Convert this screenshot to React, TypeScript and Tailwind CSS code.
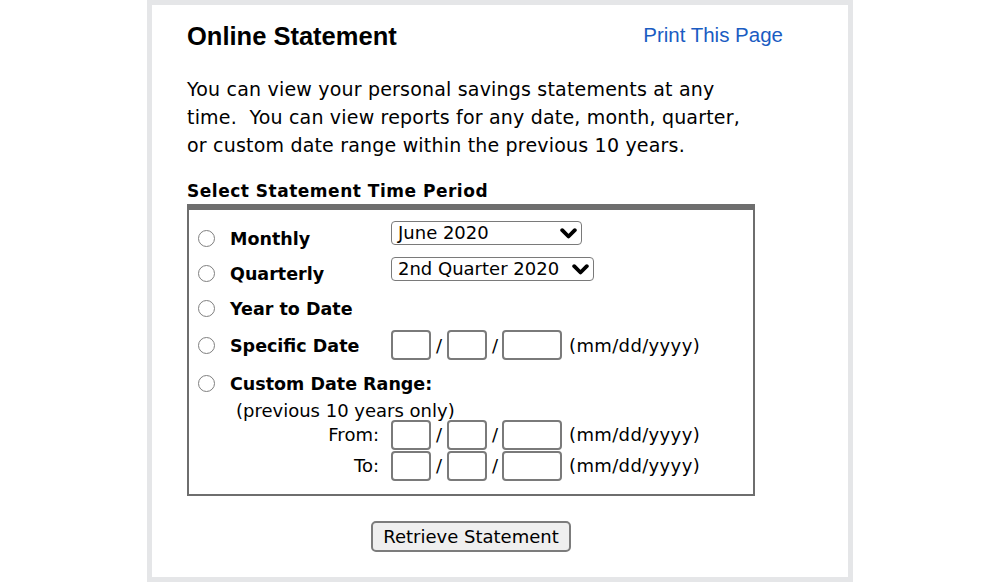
import React from "react";

const verdana = "font-['DejaVu_Sans',Verdana,sans-serif]";
const arial = "font-['Liberation_Sans',Arial,sans-serif]";

function Radio() {
  return <span className="h-[17px] w-[17px] shrink-0 rounded-full border-[1.5px] border-[#7f7f7f] bg-white" />;
}

function Chevron() {
  return (
    <svg width="17" height="11" viewBox="0 0 17 11" className="shrink-0">
      <polyline points="2.2,2.2 8.5,8.5 14.8,2.2" fill="none" stroke="#000" strokeWidth="3.8" strokeLinecap="round" strokeLinejoin="round" />
    </svg>
  );
}

function FakeSelect({ value, width }: { value: string; width: string }) {
  return (
    <div className={`mt-[1px] flex h-[24px] ${width} items-center justify-between self-start rounded-[4px] border-[1.5px] border-[#7a7a7a] bg-white pl-[6px] pr-[4px] text-[18px] leading-none`}>
      <span>{value}</span>
      <Chevron />
    </div>
  );
}

function DateInputs() {
  return (
    <div className="flex items-center text-[18px]">
      <span className="h-[30px] w-[40px] rounded-[4px] border-2 border-[#7a7a7a] bg-white" />
      <span className="mx-[5px] w-[6px] text-center">/</span>
      <span className="h-[30px] w-[40px] rounded-[4px] border-2 border-[#7a7a7a] bg-white" />
      <span className="ml-[5px] mr-[4px] w-[6px] text-center">/</span>
      <span className="h-[30px] w-[60px] rounded-[4px] border-2 border-[#7a7a7a] bg-white" />
      <span className="ml-[7px] tracking-[0.02em]">(mm/dd/yyyy)</span>
    </div>
  );
}

function OptionRow({ label, height, children }: { label: string; height: string; children?: React.ReactNode }) {
  return (
    <div className={`flex ${height} items-center`}>
      <div className="flex w-[193px] items-center">
        <Radio />
        <span className="ml-[15px] mt-[2px] whitespace-nowrap text-[17.5px] font-bold">{label}</span>
      </div>
      {children}
    </div>
  );
}

function RangeRow({ label }: { label: string }) {
  return (
    <div className="flex h-[31px] items-center">
      <span className="w-[181px] text-right text-[18px]">{label}</span>
      <div className="ml-[12px]">
        <DateInputs />
      </div>
    </div>
  );
}

export default function App() {
  return (
    <div className={`flex h-[582px] justify-center overflow-hidden bg-white text-black ${verdana}`}>
      <div className="h-[582px] w-[706px] border-[5px] border-[#e5e6e8] bg-white pl-[35px] pt-[16px]">
        <div className="flex w-[596px] items-start justify-between">
          <h1 className={`${arial} text-[25.5px] font-bold leading-[30px]`}>Online Statement</h1>
          <a href="#" className={`${arial} text-[20.5px] leading-[28px] text-[#1a5cc2]`}>
            Print This Page
          </a>
        </div>

        <p className="mt-[24px] whitespace-pre-wrap text-[19px] leading-[28px] tracking-[0.01em]">
          You can view your personal savings statements at any
          <br />
          time.{"  "}You can view reports for any date, month, quarter,
          <br />
          or custom date range within the previous 10 years.
        </p>

        <h2 className="mt-[22px] text-[17px] font-bold leading-[20px] tracking-[0.03em]">Select Statement Time Period</h2>

        <div className="mt-[3px] w-[568px] border-2 border-t-[6px] border-[#6e6e6e] pb-[13px] pl-[9px] pt-[10px]">
          <OptionRow label="Monthly" height="h-[36px]">
            <FakeSelect value="June 2020" width="w-[191px]" />
          </OptionRow>
          <OptionRow label="Quarterly" height="h-[34px]">
            <FakeSelect value="2nd Quarter 2020" width="w-[203px]" />
          </OptionRow>
          <OptionRow label="Year to Date" height="h-[36px]" />
          <OptionRow label="Specific Date" height="h-[38px]">
            <DateInputs />
          </OptionRow>
          <OptionRow label="Custom Date Range:" height="h-[38px]" />
          <div className="h-[17px] pl-[38px] text-[18px] leading-[17px]">(previous 10 years only)</div>
          <RangeRow label="From:" />
          <RangeRow label="To:" />
        </div>

        <div className="mt-[25px] flex w-[568px] justify-center">
          <button
            type="button"
            className="h-[31px] w-[200px] rounded-[5px] border-2 border-[#7c7c7c] bg-[#efefef] text-[18px] leading-none"
          >
            Retrieve Statement
          </button>
        </div>
      </div>
    </div>
  );
}
